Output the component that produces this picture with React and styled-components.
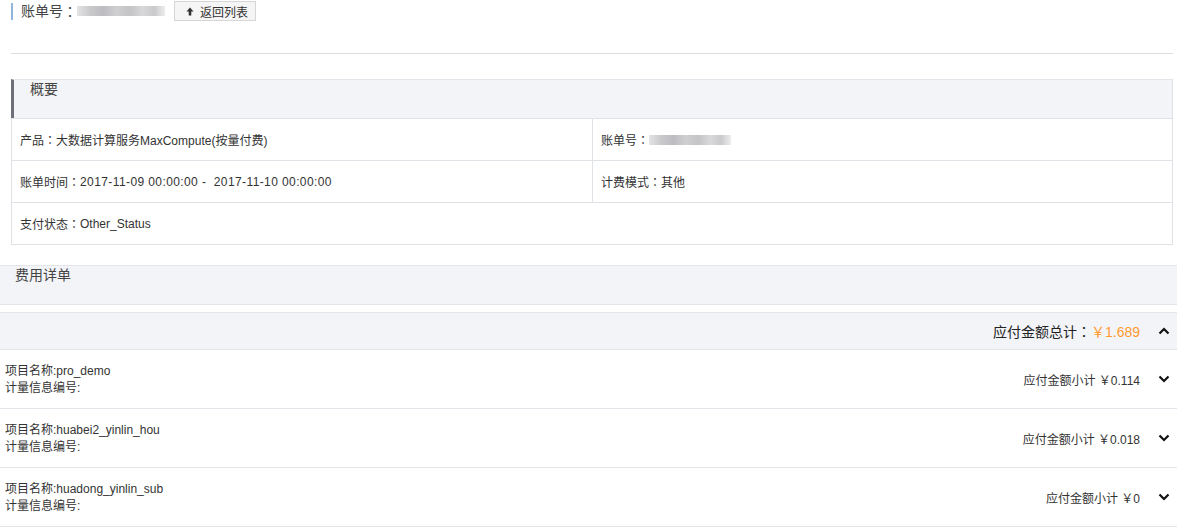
import React from "react";
import styled, { createGlobalStyle } from "styled-components";

const GlobalStyle = createGlobalStyle`
  body {
    margin: 0;
    background: #fff;
    font-family: "Liberation Sans", "Noto Sans CJK SC", sans-serif;
    color: #333;
  }
`;

// full-width colon, centred like the original page font
const C = () => <Colon>：</Colon>;

const summaryRows = [
  [
    { label: "产品", value: "大数据计算服务MaxCompute(按量付费)" },
    { label: "账单号", masked: true },
  ],
  [
    { label: "账单时间", value: "2017-11-09 00:00:00 -\u00a0 2017-11-10 00:00:00", wide: true },
    { label: "计费模式", value: "其他" },
  ],
  [{ label: "支付状态", value: "Other_Status" }],
];

const items = [
  { name: "pro_demo", amount: "0.114" },
  { name: "huabei2_yinlin_hou", amount: "0.018" },
  { name: "huadong_yinlin_sub", amount: "0" },
];

const Chevron = ({ up }) => (
  <svg width="12" height="8" viewBox="0 0 12 8">
    <polyline
      points={up ? "1.5,6.5 6,2 10.5,6.5" : "1.5,1.5 6,6 10.5,1.5"}
      fill="none"
      stroke="#111"
      strokeWidth="2.2"
    />
  </svg>
);

const App = () => {
  return (
    <Page>
      <GlobalStyle />
      <TopBar>
        <BillTitle>
          账单号<C />
          <Masked $width={88} />
        </BillTitle>
        <BackButton>
          <svg width="8" height="9" viewBox="0 0 8 9">
            <path d="M4 0.5 L7.5 4.5 L5.3 4.5 L5.3 8.5 L2.7 8.5 L2.7 4.5 L0.5 4.5 Z" fill="#333" />
          </svg>
          返回列表
        </BackButton>
      </TopBar>
      <Divider />

      <Summary>
        <SummaryHeader>概要</SummaryHeader>
        {summaryRows.map((row, i) => (
          <SummaryRow key={i}>
            {row.map((cell, j) => (
              <Cell key={j} $single={row.length === 1}>
                {cell.label}
                <C />
                {cell.masked ? (
                  <Masked $width={82} />
                ) : (
                  <Value $wide={cell.wide}>{cell.value}</Value>
                )}
              </Cell>
            ))}
          </SummaryRow>
        ))}
      </Summary>

      <SectionHeader>费用详单</SectionHeader>

      <TotalBar>
        <TotalLabel>
          应付金额总计<C />
          <Orange>￥1.689</Orange>
        </TotalLabel>
        <Toggle>
          <Chevron up />
        </Toggle>
      </TotalBar>

      {items.map((item) => (
        <ItemRow key={item.name}>
          <ItemInfo>
            <div>项目名称:{item.name}</div>
            <div>计量信息编号:</div>
          </ItemInfo>
          <Subtotal>应付金额小计 ￥{item.amount}</Subtotal>
          <Toggle>
            <Chevron />
          </Toggle>
        </ItemRow>
      ))}
    </Page>
  );
};

const Page = styled.div`
  width: 1177px;
  font-size: 12px;
`;

const Colon = styled.span`
  font-family: "Noto Sans CJK TC", sans-serif;
`;

const TopBar = styled.div`
  display: flex;
  align-items: center;
  height: 22px;
  padding-left: 11px;
`;

const BillTitle = styled.div`
  display: flex;
  align-items: center;
  height: 17px;
  border-left: 2px solid #8fb6da;
  padding-left: 8px;
  font-size: 14px;
  color: #444;
  margin-right: 9px;
  line-height: 17px;
`;

const Masked = styled.span`
  display: inline-block;
  width: ${(p) => p.$width}px;
  height: 10px;
  background: linear-gradient(
    90deg,
    #e4e4e6 0%,
    #c9c9cc 15%,
    #bdbdc1 30%,
    #cfcfd2 45%,
    #c4c4c7 60%,
    #d8d8da 75%,
    #cacacd 88%,
    #ededee 100%
  );
  filter: blur(0.6px);
`;

const BackButton = styled.button`
  display: flex;
  align-items: center;
  gap: 6px;
  height: 20px;
  width: 82px;
  padding: 0 0 0 11px;
  border: 1px solid #d6d6d6;
  background: #f5f5f5;
  font-family: inherit;
  font-size: 12px;
  color: #333;
`;

const Divider = styled.div`
  margin: 31px 4px 0 11px;
  border-top: 1px solid #dcdcdc;
`;

const Summary = styled.div`
  margin: 25px 4px 0 11px;
  border: 1px solid #dfe2e7;
  border-top: none;
`;

const SummaryHeader = styled.div`
  height: 39px;
  box-sizing: border-box;
  background: #f3f4f8;
  border-top: 1px solid #e3e5ea;
  border-left: 3px solid #6f6f7b;
  margin-left: -1px;
  padding: 0 0 0 16px;
  font-size: 14px;
  color: #444;
  line-height: 18px;
`;

const SummaryRow = styled.div`
  display: flex;
  height: 42px;
  box-sizing: border-box;
  border-top: 1px solid #dfe2e7;
`;

const Cell = styled.div`
  flex: 0 0 ${(p) => (p.$single ? "100%" : "50%")};
  box-sizing: border-box;
  display: flex;
  align-items: center;
  padding-left: 8px;
  color: #333;
  white-space: pre;
  & + & {
    border-left: 1px solid #dfe2e7;
  }
`;

const Value = styled.span`
  letter-spacing: ${(p) => (p.$wide ? "0.4px" : "0")};
`;

const SectionHeader = styled.div`
  margin-top: 20px;
  height: 40px;
  box-sizing: border-box;
  background: #f3f4f8;
  border-top: 1px solid #e3e5ea;
  border-bottom: 1px solid #e3e5ea;
  padding: 0 0 0 15px;
  font-size: 14px;
  color: #444;
  line-height: 18px;
`;

const TotalBar = styled.div`
  margin-top: 7px;
  height: 38px;
  box-sizing: border-box;
  display: flex;
  align-items: center;
  justify-content: flex-end;
  background: #f3f4f8;
  border-top: 1px solid #e3e5ea;
  border-bottom: 1px solid #e3e5ea;
`;

const TotalLabel = styled.div`
  font-size: 14px;
  color: #222;
`;

const Orange = styled.span`
  color: #ff9a2e;
`;

const Toggle = styled.div`
  width: 26px;
  margin-left: 11px;
  display: flex;
  justify-content: center;
  align-items: center;
`;

const ItemRow = styled.div`
  height: 59px;
  box-sizing: border-box;
  display: flex;
  align-items: center;
  border-bottom: 1px solid #e3e5ea;
`;

const ItemInfo = styled.div`
  flex: 1;
  padding: 1px 0 0 5px;
  line-height: 17px;
  color: #333;
`;

const Subtotal = styled.div`
  color: #333;
`;

export default App;
